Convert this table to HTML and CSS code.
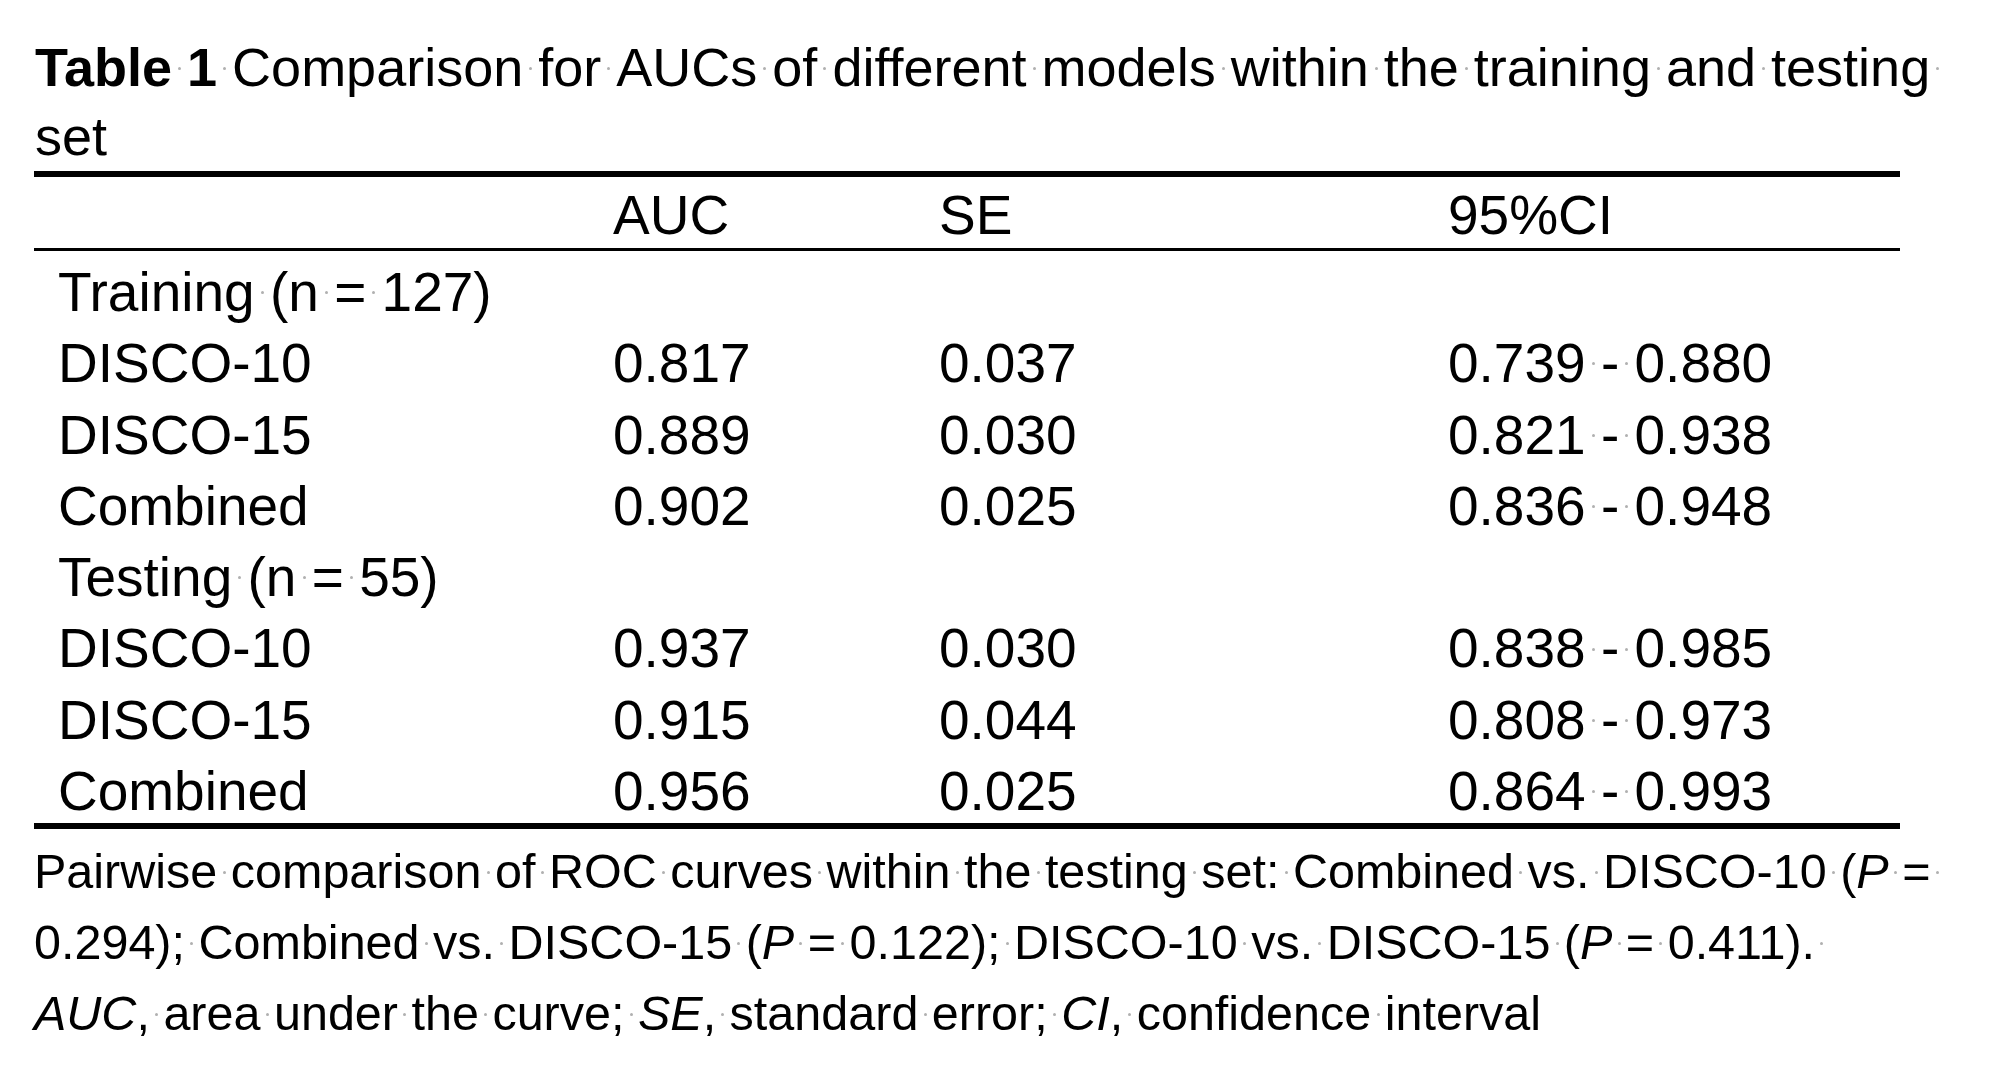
FILE: index.html
```html
<!DOCTYPE html>
<html lang="en">
<head>
<meta charset="utf-8">
<title>Table 1 Comparison for AUCs</title>
<link rel="stylesheet" href="styles.css">
</head>
<body>
<main class="page">
  <h1 class="caption"><b>Table<span class="s"> </span>1</b><span class="s"> </span>Comparison<span class="s"> </span>for<span class="s"> </span>AUCs<span class="s"> </span>of<span class="s"> </span>different<span class="s"> </span>models<span class="s"> </span>within<span class="s"> </span>the<span class="s"> </span>training<span class="s"> </span>and<span class="s"> </span>testing<span class="s">&#160;</span><br>set</h1>
  <table class="auc">
    <colgroup><col class="c1"><col class="c2"><col class="c3"><col class="c4"></colgroup>
    <thead>
      <tr><th></th><th>AUC</th><th>SE</th><th>95%CI</th></tr>
    </thead>
    <tbody>
      <tr><td colspan="4">Training<span class="s"> </span>(n<span class="s"> </span>=<span class="s"> </span>127)</td></tr>
      <tr><td>DISCO-10</td><td>0.817</td><td>0.037</td><td>0.739<span class="s"> </span>-<span class="s"> </span>0.880</td></tr>
      <tr><td>DISCO-15</td><td>0.889</td><td>0.030</td><td>0.821<span class="s"> </span>-<span class="s"> </span>0.938</td></tr>
      <tr><td>Combined</td><td>0.902</td><td>0.025</td><td>0.836<span class="s"> </span>-<span class="s"> </span>0.948</td></tr>
      <tr><td colspan="4">Testing<span class="s"> </span>(n<span class="s"> </span>=<span class="s"> </span>55)</td></tr>
      <tr><td>DISCO-10</td><td>0.937</td><td>0.030</td><td>0.838<span class="s"> </span>-<span class="s"> </span>0.985</td></tr>
      <tr><td>DISCO-15</td><td>0.915</td><td>0.044</td><td>0.808<span class="s"> </span>-<span class="s"> </span>0.973</td></tr>
      <tr><td>Combined</td><td>0.956</td><td>0.025</td><td>0.864<span class="s"> </span>-<span class="s"> </span>0.993</td></tr>
    </tbody>
  </table>
  <p class="note">Pairwise<span class="s"> </span>comparison<span class="s"> </span>of<span class="s"> </span>ROC<span class="s"> </span>curves<span class="s"> </span>within<span class="s"> </span>the<span class="s"> </span>testing<span class="s"> </span>set:<span class="s"> </span>Combined<span class="s"> </span>vs.<span class="s"> </span>DISCO-10<span class="s"> </span>(<i>P</i><span class="s"> </span>=<span class="s">&#160;</span><br>0.294);<span class="s"> </span>Combined<span class="s"> </span>vs.<span class="s"> </span>DISCO-15<span class="s"> </span>(<i>P</i><span class="s"> </span>=<span class="s"> </span>0.122);<span class="s"> </span>DISCO-10<span class="s"> </span>vs.<span class="s"> </span>DISCO-15<span class="s"> </span>(<i>P</i><span class="s"> </span>=<span class="s"> </span>0.411).<span class="s">&#160;</span><br><i>AUC</i>,<span class="s"> </span>area<span class="s"> </span>under<span class="s"> </span>the<span class="s"> </span>curve;<span class="s"> </span><i>SE</i>,<span class="s"> </span>standard<span class="s"> </span>error;<span class="s"> </span><i>CI</i>,<span class="s"> </span>confidence<span class="s"> </span>interval</p>
</main>
</body>
</html>
```

FILE: styles.css
```css
html,
body {
  margin: 0;
  background: #fff;
}

body {
  font-family: "Liberation Sans", Arial, sans-serif;
  color: #000;
}

.page {
  padding: 33px 0 0 34px;
}

.caption {
  margin: 0;
  padding-left: 1px;
  font-size: 54px;
  font-weight: 400;
  line-height: 69px;
  white-space: nowrap;
}

.caption b {
  font-weight: 700;
}

.auc {
  width: 1866px;
  border-collapse: separate;
  border-spacing: 0;
  table-layout: fixed;
  font-size: 55px;
}

.c1 { width: 579px; }
.c2 { width: 326px; }
.c3 { width: 509px; }
.c4 { width: 452px; }

.auc th {
  font-weight: 400;
  text-align: left;
  padding: 5px 0 0;
  line-height: 66px;
  border-top: 6px solid #000;
  border-bottom: 3px solid #000;
}

.auc td {
  padding: 12px 0 0;
  line-height: 59.3px;
  white-space: nowrap;
}

.auc td:first-child {
  padding-left: 24px;
}

.auc tbody tr:last-child td {
  padding-bottom: 2px;
  border-bottom: 6px solid #000;
}

.note {
  margin: 7px 0 0;
  font-size: 48.5px;
  line-height: 71px;
  white-space: nowrap;
}

/* Word-style formatting mark drawn on each space */
.s {
  position: relative;
}

.s::after {
  content: "";
  position: absolute;
  left: calc(50% - 1.5px);
  top: calc(0.575em - 1.5px);
  width: 3px;
  height: 3px;
  border-radius: 50%;
  background: #b0b0b0;
}
```
